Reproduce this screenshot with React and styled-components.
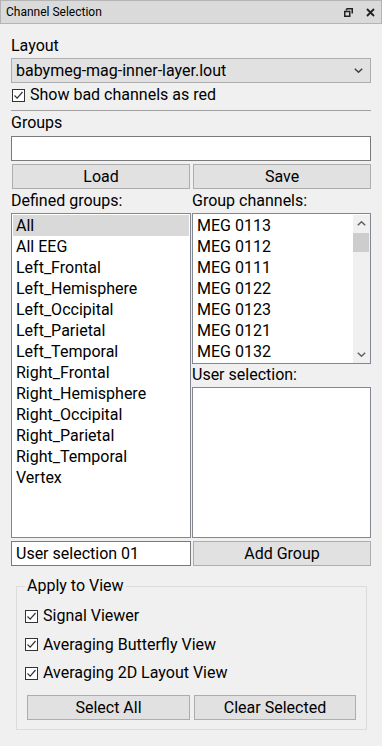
import React from 'react'
import styled, { createGlobalStyle } from 'styled-components'

const GlobalStyle = createGlobalStyle`
    body {
        margin: 0;
        background: #f0f0f0;
    }
    * {
        box-sizing: border-box;
    }
`;

const Window = styled.div`
    width: 382px;
    height: 746px;
    overflow: hidden;
    background: #f0f0f0;
    font-family: Roboto, "Liberation Sans", sans-serif;
    font-size: 16px;
    color: #000;
    display: flex;
    flex-direction: column;
`;

const TitleBar = styled.div`
    height: 24px;
    flex: none;
    display: flex;
    align-items: center;
    padding: 0 6px 0 5px;
    background: #dadada;
    border: 1px solid #b4b4b4;
    font-size: 12px;
    line-height: 14px;
`;

const Title = styled.span`
    flex: 1;
`;

const TitleButtons = styled.div`
    display: flex;
    align-items: center;
    gap: 13px;
    color: #222;
`;

const Content = styled.div`
    padding: 12px 11px 0 11px;
    display: flex;
    flex-direction: column;
`;

const Label = styled.div`
    line-height: 20px;
    height: 20px;
    margin-top: ${props => props.mt || 0}px;
    white-space: nowrap;
`;

const Combo = styled.div`
    margin-top: 2px;
    height: 25px;
    border: 1px solid #adadad;
    background: #e1e1e1;
    display: flex;
    align-items: center;
    padding: 0 7px 0 4px;
    line-height: 20px;

    & > span {
        flex: 1;
    }
`;

const CheckRow = styled.label`
    display: flex;
    align-items: center;
    gap: 5px;
    height: 20px;
    line-height: 20px;
    margin-top: ${props => props.mt || 0}px;
    padding-left: 1px;
    white-space: nowrap;
`;

const Box = styled.span`
    width: 13px;
    height: 13px;
    flex: none;
    border: 1px solid #333;
    background: #fff;
    display: flex;
    align-items: center;
    justify-content: center;
`;

const Separator = styled.div`
    margin-top: 5px;
    height: 1px;
    background: #a0a0a0;
`;

const TextInput = styled.div`
    margin-top: ${props => props.mt || 0}px;
    height: 25px;
    border: 1px solid #7a7a7a;
    background: #fff;
    padding: 0 4px;
    line-height: 23px;
    white-space: nowrap;
`;

const Row = styled.div`
    display: grid;
    grid-template-columns: 180px 179px;
    column-gap: 1px;
    margin-top: ${props => props.mt || 0}px;
`;

const Button = styled.div`
    height: 25px;
    margin: ${props => props.margin || '0'};
    border: 1px solid #adadad;
    background: #e1e1e1;
    display: flex;
    align-items: center;
    justify-content: center;
    line-height: 20px;
    white-space: nowrap;
`;

const Lists = styled.div`
    display: grid;
    grid-template-columns: 180px 179px;
    column-gap: 1px;
    height: 325px;
    margin-top: 2px;
`;

const Column = styled.div`
    display: flex;
    flex-direction: column;
    min-height: 0;
`;

const ListBox = styled.div`
    height: ${props => props.h}px;
    flex: none;
    border: 1px solid #828790;
    background: #fff;
    padding: 1px;
    display: flex;
    overflow: hidden;
`;

const Items = styled.div`
    flex: 1;
    display: flex;
    flex-direction: column;
    min-width: 0;
`;

const Item = styled.div`
    height: 21px;
    flex: none;
    line-height: 21px;
    padding-left: 3px;
    white-space: nowrap;
    background: ${props => props.selected ? '#d9d9d9' : 'transparent'};
`;

const ScrollBar = styled.div`
    width: 17px;
    flex: none;
    margin-right: -1px;
    margin-bottom: -1px;
    background: #f0f0f0;
    display: flex;
    flex-direction: column;
`;

const ArrowButton = styled.div`
    height: 17px;
    flex: none;
    display: flex;
    align-items: center;
    justify-content: center;
    color: #606060;
`;

const Thumb = styled.div`
    height: 19px;
    flex: none;
    background: #cdcdcd;
    margin: 1px 1px 0 0;
`;

const Track = styled.div`
    flex: 1;
`;

const GroupBox = styled.fieldset`
    margin: 10px 0 0 5px;
    width: 351px;
    padding: 0 10px 9px 7px;
    border: 1px solid #dcdcdc;
    display: flex;
    flex-direction: column;
    gap: 8.5px;
    min-width: 0;
`;

const Legend = styled.legend`
    padding: 0 2px;
    margin-left: 1px;
    line-height: 20px;
    height: 20px;
`;

const GroupChecks = styled.div`
    margin-top: 10px;
    display: flex;
    flex-direction: column;
    gap: 8.5px;
`;

const GroupButtons = styled.div`
    display: grid;
    grid-template-columns: 163px 162px;
    column-gap: 4px;
    margin: 3.5px 0 0 3px;
`;

const Check = () => (
    <svg width="11" height="11" viewBox="0 0 11 11">
        <path d="M1.5 5.5 L4.2 8.2 L9.5 2" fill="none" stroke="#333" strokeWidth="1.2" />
    </svg>
);

const CheckBox = ({ children, mt }) => (
    <CheckRow mt={mt}>
        <Box><Check /></Box>
        {children}
    </CheckRow>
);

const Chevron = ({ up, w = 9, h = 5, color = 'currentColor' }) => (
    <svg width={w} height={h} viewBox="0 0 9 5">
        <path d={up ? 'M0.8 4.3 L4.5 0.8 L8.2 4.3' : 'M0.8 0.7 L4.5 4.2 L8.2 0.7'} fill="none" stroke={color} strokeWidth="1.5" />
    </svg>
);

const FloatIcon = () => (
    <svg width="9" height="9" viewBox="0 0 9 9">
        <path d="M2.5 0.75 H8.25 V5.5 M2.5 2.5 V0.75" fill="none" stroke="#222" strokeWidth="1.5" />
        <rect x="0.75" y="3.5" width="5" height="4.75" fill="none" stroke="#222" strokeWidth="1.5" />
    </svg>
);

const CloseIcon = () => (
    <svg width="9" height="9" viewBox="0 0 9 9">
        <path d="M1 1 L8 8 M8 1 L1 8" fill="none" stroke="#222" strokeWidth="1.8" />
    </svg>
);

const groups = [
    'All', 'All EEG', 'Left_Frontal', 'Left_Hemisphere', 'Left_Occipital',
    'Left_Parietal', 'Left_Temporal', 'Right_Frontal', 'Right_Hemisphere',
    'Right_Occipital', 'Right_Parietal', 'Right_Temporal', 'Vertex',
];

const channels = ['MEG 0113', 'MEG 0112', 'MEG 0111', 'MEG 0122', 'MEG 0123', 'MEG 0121', 'MEG 0132'];

const App = () => {
    return (
        <Window>
            <GlobalStyle />
            <TitleBar>
                <Title>Channel Selection</Title>
                <TitleButtons>
                    <FloatIcon />
                    <CloseIcon />
                </TitleButtons>
            </TitleBar>
            <Content>
                <Label>Layout</Label>
                <Combo>
                    <span>babymeg-mag-inner-layer.lout</span>
                    <Chevron w={9} h={5} color="#404040" />
                </Combo>
                <CheckBox mt={2}>Show bad channels as red</CheckBox>
                <Separator />
                <Label mt={2}>Groups</Label>
                <TextInput mt={3} />
                <Row mt={3}>
                    <Button margin="0 1px">Load</Button>
                    <Button margin="0 0 0 1px">Save</Button>
                </Row>
                <Row mt={2}>
                    <Label>Defined groups:</Label>
                    <Label>Group channels:</Label>
                </Row>
                <Lists>
                    <Column>
                        <ListBox h={325}>
                            <Items>
                                {groups.map((g, i) => (
                                    <Item key={g} selected={i === 0}>{g}</Item>
                                ))}
                            </Items>
                        </ListBox>
                    </Column>
                    <Column>
                        <ListBox h={151}>
                            <Items>
                                {channels.map(c => <Item key={c}>{c}</Item>)}
                            </Items>
                            <ScrollBar>
                                <ArrowButton><Chevron up /></ArrowButton>
                                <Thumb />
                                <Track />
                                <ArrowButton><Chevron /></ArrowButton>
                            </ScrollBar>
                        </ListBox>
                        <Label mt={1}>User selection:</Label>
                        <ListBox h={151} style={{ marginTop: 2 }} />
                    </Column>
                </Lists>
                <Row mt={3}>
                    <TextInput>User selection 01</TextInput>
                    <Button margin="0 0 0 1px">Add Group</Button>
                </Row>
                <GroupBox>
                    <Legend>Apply to View</Legend>
                    <GroupChecks>
                        <CheckBox>Signal Viewer</CheckBox>
                        <CheckBox>Averaging Butterfly View</CheckBox>
                        <CheckBox>Averaging 2D Layout View</CheckBox>
                    </GroupChecks>
                    <GroupButtons>
                        <Button>Select All</Button>
                        <Button>Clear Selected</Button>
                    </GroupButtons>
                </GroupBox>
            </Content>
        </Window>
    )
}

export default App;
